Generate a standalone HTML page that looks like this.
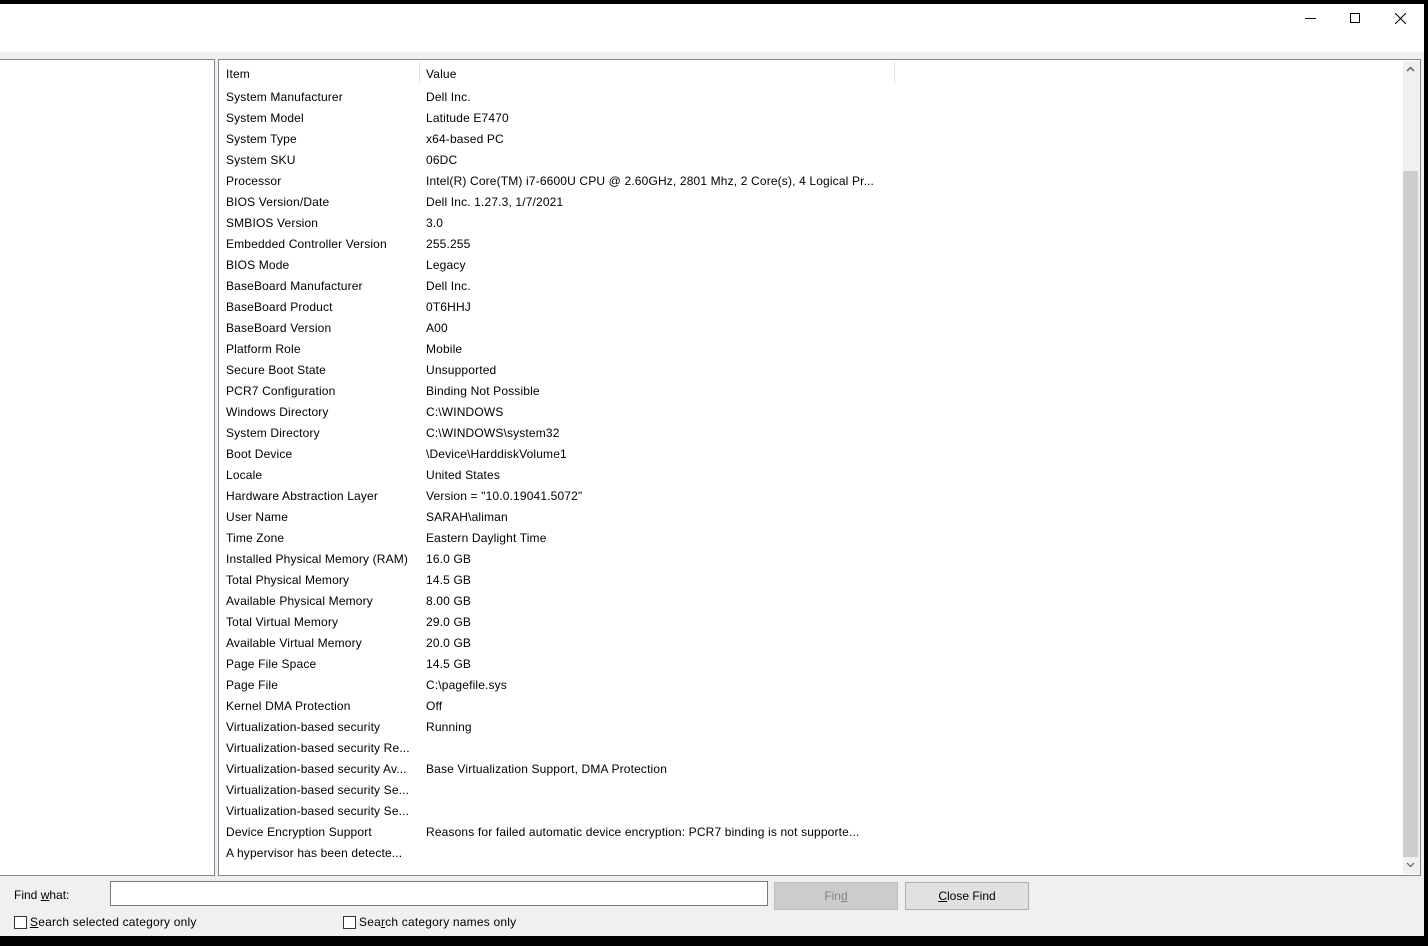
<!DOCTYPE html>
<html><head><meta charset="utf-8"><style>
*{margin:0;padding:0;box-sizing:border-box}
body{width:1428px;height:946px;background:#000;position:relative;overflow:hidden;font-family:"Liberation Sans",sans-serif;font-size:12px;color:#000}
.win{position:absolute;left:0;top:4px;width:1424px;height:932px;background:#f0f0f0}
.title{position:absolute;left:0;top:0;width:1424px;height:48px;background:#fff}
.pane{position:absolute;background:#fff;border:1px solid #828790}
.row{position:absolute;left:7px;height:21px;line-height:21px;white-space:nowrap;letter-spacing:0.15px}
.v{position:absolute;left:200px;white-space:nowrap}
.btn{position:absolute;top:878px;height:28px;border:1px solid #adadad;background:#e1e1e1;text-align:center;line-height:27px}
.cb{position:absolute;top:912px;width:13px;height:13px;border:1px solid #333;background:#fff}
.lbl{position:absolute;white-space:nowrap}
</style></head><body>
<div class="win">
<div class="title">
<div style="position:absolute;left:1305px;top:14px;width:11px;height:1px;background:#000"></div>
<div style="position:absolute;left:1350px;top:9px;width:10px;height:10px;border:1px solid #000"></div>
<svg style="position:absolute;left:1395px;top:9px" width="11" height="11"><path d="M0 0L11 11M11 0L0 11" stroke="#000" stroke-width="1"/></svg>
</div>
<div class="pane" style="left:-1px;top:55px;width:216px;height:817px"></div>
<div class="pane" style="left:218px;top:55px;width:1203px;height:817px;overflow:hidden">
<div style="position:absolute;left:200px;top:2px;width:1px;height:22px;background:#e5e5e5"></div>
<div style="position:absolute;left:675px;top:2px;width:1px;height:22px;background:#e5e5e5"></div>
<div style="position:absolute;left:1184px;top:1px;width:17px;height:813px;background:#f0f0f0"></div>
<div style="position:absolute;left:1184px;top:111px;width:15px;height:686px;background:#cdcdcd"></div>
<svg style="position:absolute;left:1187px;top:6px" width="9" height="6"><path d="M1 5L4.5 1.5L8 5" stroke="#606060" stroke-width="1.5" fill="none"/></svg>
<svg style="position:absolute;left:1187px;top:802px" width="9" height="6"><path d="M1 1L4.5 4.5L8 1" stroke="#606060" stroke-width="1.2" fill="none"/></svg>
<div id="rows"></div>
</div>
<div class="lbl" style="left:14px;top:884px">Find <u>w</u>hat:</div>
<div style="position:absolute;left:110px;top:877px;width:658px;height:25px;background:#fff;border:1px solid #7a7a7a"></div>
<div class="btn" style="left:774px;width:124px;background:#cccccc;border-color:#bfbfbf;color:#838383">Fin<u>d</u></div>
<div class="btn" style="left:905px;width:124px"><u>C</u>lose Find</div>
<div class="cb" style="left:14px"></div><div class="lbl" style="left:30px;top:911px;letter-spacing:0.2px"><u>S</u>earch selected category only</div>
<div class="cb" style="left:343px"></div><div class="lbl" style="left:359px;top:911px;letter-spacing:0.2px">Sea<u>r</u>ch category names only</div>
</div>
<script>
var d=[["Item","Value"],["System Manufacturer","Dell Inc."],["System Model","Latitude E7470"],["System Type","x64-based PC"],["System SKU","06DC"],["Processor","Intel(R) Core(TM) i7-6600U CPU @ 2.60GHz, 2801 Mhz, 2 Core(s), 4 Logical Pr..."],["BIOS Version/Date","Dell Inc. 1.27.3, 1/7/2021"],["SMBIOS Version","3.0"],["Embedded Controller Version","255.255"],["BIOS Mode","Legacy"],["BaseBoard Manufacturer","Dell Inc."],["BaseBoard Product","0T6HHJ"],["BaseBoard Version","A00"],["Platform Role","Mobile"],["Secure Boot State","Unsupported"],["PCR7 Configuration","Binding Not Possible"],["Windows Directory","C:\\WINDOWS"],["System Directory","C:\\WINDOWS\\system32"],["Boot Device","\\Device\\HarddiskVolume1"],["Locale","United States"],["Hardware Abstraction Layer","Version = \"10.0.19041.5072\""],["User Name","SARAH\\aliman"],["Time Zone","Eastern Daylight Time"],["Installed Physical Memory (RAM)","16.0 GB"],["Total Physical Memory","14.5 GB"],["Available Physical Memory","8.00 GB"],["Total Virtual Memory","29.0 GB"],["Available Virtual Memory","20.0 GB"],["Page File Space","14.5 GB"],["Page File","C:\\pagefile.sys"],["Kernel DMA Protection","Off"],["Virtualization-based security","Running"],["Virtualization-based security Re...",""],["Virtualization-based security Av...","Base Virtualization Support, DMA Protection"],["Virtualization-based security Se...",""],["Virtualization-based security Se...",""],["Device Encryption Support","Reasons for failed automatic device encryption: PCR7 binding is not supporte..."],["A hypervisor has been detecte...",""]];
var h="";d.forEach(function(r,i){var t=i==0?4:27+(i-1)*21;h+='<div class="row" style="top:'+t+'px">'+r[0]+'<span class="v">'+r[1]+'</span></div>';});
document.getElementById("rows").innerHTML=h;
</script>
</body></html>
